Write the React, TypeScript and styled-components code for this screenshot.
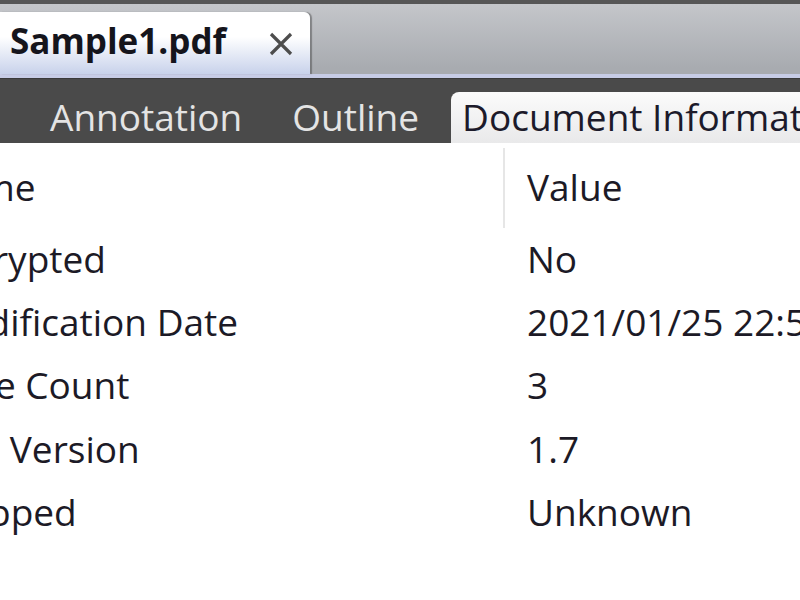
import React from 'react'
import styled, { createGlobalStyle } from 'styled-components'

const GlobalStyle = createGlobalStyle`
  html, body {
    margin: 0;
    padding: 0;
    width: 800px;
    height: 600px;
    overflow: hidden;
    background: #ffffff;
  }
  * { box-sizing: border-box; }
`

interface TabProps {
  active?: boolean
}

interface CellProps {
  value?: boolean
}

interface Row {
  name: string
  value: string
}

const rows: Row[] = [
  { name: 'Encrypted', value: 'No' },
  { name: 'Modification Date', value: '2021/01/25 22:54:10' },
  { name: 'Page Count', value: '3' },
  { name: 'PDF Version', value: '1.7' },
  { name: 'Trapped', value: 'Unknown' },
]

const Window = styled.div`
  width: 800px;
  height: 600px;
  display: flex;
  flex-direction: column;
  font-family: 'Open Sans', 'Noto Sans', sans-serif;
  overflow: hidden;
`

const TopStrip = styled.div`
  height: 4px;
  background: #565656;
  flex-shrink: 0;
`

const DocTabBar = styled.div`
  height: 74px;
  flex-shrink: 0;
  display: flex;
  align-items: flex-end;
  background: linear-gradient(#c4c6ca, #a8abb0 92%);
  border-bottom: 4px solid #c7cce6;
`

const FileTab = styled.div`
  width: 310px;
  height: 62px;
  display: flex;
  align-items: center;
  justify-content: space-between;
  padding: 0 16px 0 10px;
  background: linear-gradient(#ffffff 40%, #c8d2eb);
  border-top-right-radius: 6px;
  box-shadow: 2px 0 1px rgba(60, 60, 60, 0.45);
`

const FileTitle = styled.span`
  font-size: 35px;
  font-weight: 700;
  color: #15151c;
  margin-top: -5px;
`

const CloseMark = styled.svg`
  width: 26px;
  height: 26px;
  margin-top: 2px;
`

const PanelTabBar = styled.div`
  height: 65px;
  flex-shrink: 0;
  display: flex;
  align-items: flex-end;
  background: #4a4a4a;
  border-top: 1px solid #3a3a3a;
  padding-left: 25px;
`

const PanelTab = styled.div<TabProps>`
  height: 51px;
  display: flex;
  align-items: center;
  padding: ${({ active }) => (active ? '0 0 3px 11px' : '0 25px 3px')};
  margin-left: ${({ active }) => (active ? '7px' : '0')};
  flex: ${({ active }) => (active ? '1' : 'none')};
  white-space: nowrap;
  overflow: hidden;
  font-size: 37px;
  color: ${({ active }) => (active ? '#1c1a2a' : '#e4e4e4')};
  background: ${({ active }) =>
    active ? 'linear-gradient(#fbfbfb, #e9e9ea)' : 'transparent'};
  border-top-left-radius: ${({ active }) => (active ? '8px' : '0')};
`

const ListView = styled.div`
  flex: 1;
  overflow: hidden;
  background: #ffffff;
`

const Grid = styled.div`
  margin-left: -92px;
  display: grid;
  grid-template-columns: 597px 1fr;
  font-size: 37px;
  color: #1c1a26;
`

const HeaderCell = styled.div<CellProps>`
  height: 80px;
  margin-top: 5px;
  display: flex;
  align-items: center;
  padding-left: ${({ value }) => (value ? '22px' : '24px')};
  padding-bottom: 4px;
  white-space: nowrap;
  border-right: ${({ value }) => (value ? 'none' : '2px solid #e6e6e6')};
`

const Cell = styled.div<CellProps>`
  height: 63.2px;
  display: flex;
  align-items: center;
  padding-left: ${({ value }) => (value ? '22px' : '24px')};
  padding-bottom: 2px;
  white-space: nowrap;
  overflow: hidden;
`

const App = () => {
  return (
    <>
      <GlobalStyle />
      <Window>
        <TopStrip />
        <DocTabBar>
          <FileTab>
            <FileTitle>Sample1.pdf</FileTitle>
            <CloseMark viewBox="0 0 26 26">
              <path d="M3 3 L23 23 M23 3 L3 23" stroke="#4d4d4d" strokeWidth="3.2" />
            </CloseMark>
          </FileTab>
        </DocTabBar>
        <PanelTabBar>
          <PanelTab>Annotation</PanelTab>
          <PanelTab>Outline</PanelTab>
          <PanelTab active>Document Information</PanelTab>
        </PanelTabBar>
        <ListView>
          <Grid>
            <HeaderCell>Name</HeaderCell>
            <HeaderCell value>Value</HeaderCell>
            {rows.map(row => (
              <React.Fragment key={row.name}>
                <Cell>{row.name}</Cell>
                <Cell value>{row.value}</Cell>
              </React.Fragment>
            ))}
          </Grid>
        </ListView>
      </Window>
    </>
  )
}

export default App
